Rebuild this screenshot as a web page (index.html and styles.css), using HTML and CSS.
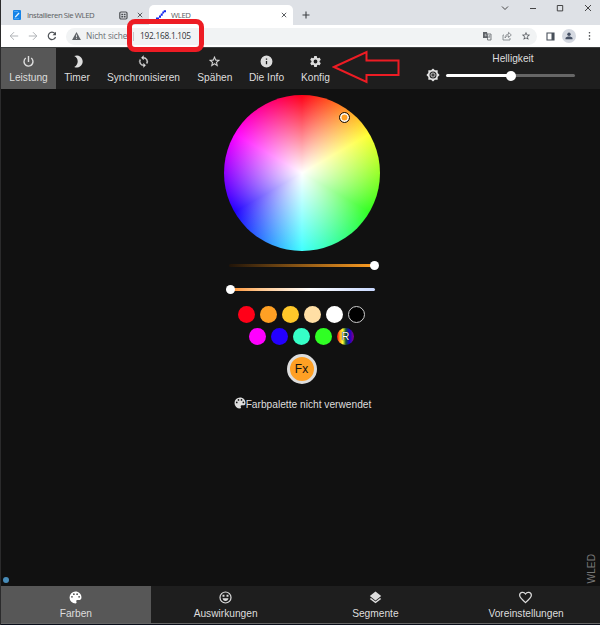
FILE: index.html
```html
<!DOCTYPE html>
<html lang="de">
<head>
<meta charset="utf-8">
<title>WLED</title>
<link rel="stylesheet" href="styles.css">
</head>
<body>
<div class="window">
  <div class="tabs">
    <div class="tab">
      <svg class="fav" viewBox="0 0 8 10"><rect width="8" height="10" rx="1" fill="#1583e8"/><path d="M2 6.5 5.5 2.5 6.5 3.5 3 7.2 1.8 7.5Z" fill="#e8f5ff"/><path d="M1 1.5h4M1 8.7h5" stroke="#65b5fa" stroke-width=".7"/></svg>
      <span class="tab-title">Installieren Sie WLED</span>
      <svg class="badge" viewBox="0 0 9 9"><rect x=".8" y="1" width="7.2" height="7" rx="1.2" fill="none" stroke="#4a4d51" stroke-width="1.2"/><path d="M2.300 2.800h1.800v1.400H2.300zM4.800 2.800h1.800v1.400H4.800zM2.300 4.900h1.800v1.500H2.300zM4.800 4.900h1.800v1.500H4.800z" fill="#4a4d51"/></svg>
      <svg class="close" viewBox="0 0 6 6"><path d="m.8.8 4.4 4.4M5.2.8.8 5.2"/></svg>
    </div>
    <div class="tab active">
      <svg class="fav wled" viewBox="0 0 10 10"><path d="M0 7.5h3v2H0zM3 5.5h2v2.3H3zM4.7 3.5h2v2.3h-2zM6.3 1.5h1.8v2H6.3zM7.7.3H10v2H7.7z" fill="#1226ee"/></svg>
      <span class="tab-title">WLED</span>
      <svg class="close" viewBox="0 0 6 6"><path d="m.8.8 4.4 4.4M5.2.8.8 5.2"/></svg>
    </div>
    <svg class="plus" viewBox="0 0 8 8"><path d="M4 .5v7M.5 4h7"/></svg>
    <div class="win-controls">
      <svg viewBox="0 0 8 8"><path d="m1 2.5 3 3 3-3"/></svg>
      <svg viewBox="0 0 8 8"><path d="M1 4.5h6"/></svg>
      <svg viewBox="0 0 8 8"><path d="M1.3 1.5h5.4v5.4H1.3z"/></svg>
      <svg viewBox="0 0 8 8"><path d="m1 1 6 6M7 1 1 7"/></svg>
    </div>
  </div>
  <div class="toolbar">
    <svg class="nav dim" viewBox="0 0 10 10"><path d="M9.2 5H1.2M5 1.2 1.2 5 5 8.8"/></svg>
    <svg class="nav dim" viewBox="0 0 10 10"><path d="M.8 5h8M5 1.2 8.8 5 5 8.8"/></svg>
    <svg class="nav" viewBox="0 0 10 10"><path d="M8.5 6A3.7 3.7 0 1 1 7.8 2.5"/><path d="M9 .7v3.5H5.5z" class="solid"/></svg>
    <div class="omnibox">
      <svg class="warn" viewBox="0 0 10 9"><path d="M5 0 10 9H0Z" fill="#5f6368"/><path d="M5 3v3M5 6.8v1" stroke="#f1f3f4" stroke-width=".9"/></svg>
      <span class="insecure">Nicht sicher</span>
      <span class="sep"></span>
      <span class="url">192.168.1.105</span>
      <div class="box-icons">
        <svg viewBox="0 0 10 10"><path d="M5 3h4v6H5.600z" fill="none" stroke="#5f6368" stroke-width=".8"/><path d="M1 1h4l1 6H1z" fill="#5f6368"/><path d="M4.3 3.2H3.2v1.7h1v-.7" fill="none" stroke="#ddd" stroke-width=".6"/><path d="M6.3 5h2.2M7.5 4.3v.8L6.4 7M6.8 5.5l1.5 1.7" fill="none" stroke="#5f6368" stroke-width=".5"/></svg>
        <svg viewBox="0 0 10 10"><path d="M2 4H1v5h7V7M3 7c.2-2.5 1.5-3.7 3.5-3.8V1.3L9.3 4 6.5 6.5V4.8C5 4.8 4 5.5 3 7Z" fill="none" stroke="#777b80" stroke-width=".8"/></svg>
        <svg viewBox="0 0 24 24"><path fill="#4f5358" d="M22 9.24l-7.19-.62L12 2 9.190 8.630 2 9.240l5.460 4.730L5.820 21 12 17.270 18.180 21l-1.630-7.030zM12 15.400l-3.760 2.270 1-4.280-3.320-2.880 4.380-.38L12 6.100l1.710 4.040 4.380.38-3.320 2.880 1 4.280z"/></svg>
      </div>
    </div>
    <svg class="side" viewBox="0 0 9 9"><path d="M1 1h7v7H1z" fill="none" stroke="#474f59" stroke-width="1.1"/><path d="M5.5 1H8v7H5.5z" fill="#474f59"/></svg>
    <span class="avatar"><svg viewBox="0 0 8 8"><circle cx="4" cy="2.3" r="1.7"/><path d="M.5 7.3V6C1.500 4 6.500 4 7.500 6v1.300z"/></svg></span>
    <svg class="more" viewBox="0 0 3 10"><circle cx="1.500" cy="1.700" r=".8"/><circle cx="1.500" cy="4.900" r=".8"/><circle cx="1.500" cy="8.100" r=".8"/></svg>
  </div>

  <header class="top">
    <div class="btn w55 on"><svg viewBox="0 0 24 24"><path d="M13.300 2h-2.600v11h2.600zm4.530 2.800-1.700 1.700A6.920 6.920 0 0 1 19 12a7 7 0 1 1-11.200-5.500L6.100 4.800A9.500 9.500 0 0 0 2.500 12a9.500 9.500 0 1 0 15.330-7.200z"/></svg><span>Leistung</span></div>
    <div class="btn w42"><svg viewBox="0 0 24 24"><path d="M6 2A11 11 0 1 1 6 22C14.500 18 14.500 6 6 2z"/></svg><span>Timer</span></div>
    <div class="btn w91"><svg viewBox="0 0 24 24"><path d="M12 4V1L8 5l4 4V6a6 6 0 0 1 5.250 8.800l1.460 1.460A8 8 0 0 0 12 4zm0 14a6 6 0 0 1-5.250-8.800L5.290 7.740A8 8 0 0 0 12 20v3l4-4-4-4z" stroke="#ddd" stroke-width=".6"/></svg><span>Synchronisieren</span></div>
    <div class="btn w52"><svg viewBox="0 0 24 24"><path d="M22 9.240l-7.190-.62L12 2 9.190 8.630 2 9.240l5.460 4.730L5.820 21 12 17.270 18.180 21l-1.630-7.030zM12 15.400l-3.760 2.270 1-4.280-3.320-2.880 4.380-.38L12 6.100l1.710 4.040 4.380.38-3.320 2.880 1 4.280z" stroke="#ddd" stroke-width=".4"/></svg><span>Spähen</span></div>
    <div class="btn w52"><svg viewBox="0 0 24 24"><path d="M12 1a11 11 0 1 0 0 22 11 11 0 0 0 0-22zm1.200 16h-2.400v-6h2.400zm0-8.200h-2.400V6.400h2.400z"/></svg><span>Die Info</span></div>
    <div class="btn w46"><svg viewBox="0 0 24 24"><path d="M19.430 12.980c.04-.32.07-.64.07-.98s-.03-.66-.07-.98l2.110-1.650c.19-.15.240-.42.120-.64l-2-3.460c-.12-.22-.39-.3-.61-.22l-2.490 1c-.52-.4-1.080-.73-1.690-.98l-.38-2.650A.488.488 0 0 0 14 2h-4c-.25 0-.46.180-.49.420l-.38 2.650c-.61.250-1.170.590-1.690.980l-2.490-1c-.23-.09-.49 0-.61.220l-2 3.460c-.13.220-.07.490.120.640l2.110 1.650c-.04.320-.07.650-.07.980s.030.660.070.980l-2.110 1.650c-.19.150-.24.420-.12.640l2 3.460c.12.220.39.300.61.220l2.490-1c.52.400 1.080.730 1.690.980l.38 2.650c.03.240.24.420.49.420h4c.25 0 .46-.18.490-.42l.38-2.650c.61-.25 1.170-.59 1.690-.98l2.490 1c.23.090.49 0 .61-.22l2-3.460c.12-.22.070-.49-.12-.64zM12 15.500a3.500 3.500 0 1 1 0-7 3.500 3.500 0 0 1 0 7z"/></svg><span>Konfig</span></div>
    <div class="brightness">
      <svg viewBox="0 0 24 24"><path d="M20 8.690V4h-4.690L12 .690 8.690 4H4v4.690L.690 12 4 15.310V20h4.690L12 23.310 15.310 20H20v-4.690L23.310 12z"/><circle cx="12" cy="12" r="6" fill="#222"/><circle cx="12" cy="12" r="3.600" fill="#444" stroke="#ddd" stroke-width="1.400"/></svg>
      <div class="bri"><span class="bri-label">Helligkeit</span><div class="track bri-track"><i class="thumb mid"></i></div></div>
    </div>
  </header>

  <main>
    <div class="wheel"><i class="picker"></i></div>
    <div class="track value"><i class="thumb end"></i></div>
    <div class="track kelvin"><i class="thumb start"></i></div>
    <div class="swatches first"><i class="red"></i><i class="orange"></i><i class="amber"></i><i class="warm"></i><i class="white"></i><i class="black"></i></div>
    <div class="swatches"><i class="magenta"></i><i class="blue"></i><i class="aqua"></i><i class="green"></i><i class="rainbow">R</i></div>
    <div class="fx">Fx</div>
    <div class="palette"><svg viewBox="0 0 24 24"><path d="M12 1a11 11 0 0 0 0 22c1.800 0 2.500-1.800 1.700-3-.9-1.500-.2-3.300 1.700-3.300H18A5 5 0 0 0 23 11.500C23 5.500 18 1 12 1zM5.500 12.500a1.700 1.700 0 1 1 0-3.400 1.700 1.700 0 0 1 0 3.400zm3.500-5a1.700 1.700 0 1 1 0-3.400 1.700 1.700 0 0 1 0 3.400zm6 0a1.700 1.700 0 1 1 0-3.400 1.700 1.700 0 0 1 0 3.400zm3.700 5a1.700 1.700 0 1 1 0-3.400 1.700 1.700 0 0 1 0 3.400z"/></svg><span>Farbpalette nicht verwendet</span></div>
    <div class="foot"><i class="dot"></i><span class="brand">WLED</span></div>
  </main>

  <nav class="bottom">
    <div class="btn on"><svg viewBox="0 0 24 24"><path fill="#fff" d="M12 1a11 11 0 0 0 0 22c1.800 0 2.500-1.800 1.700-3-.9-1.500-.2-3.300 1.700-3.300H18A5 5 0 0 0 23 11.500C23 5.500 18 1 12 1zM5.500 12.500a1.700 1.700 0 1 1 0-3.400 1.700 1.700 0 0 1 0 3.400zm3.500-5a1.700 1.700 0 1 1 0-3.400 1.700 1.700 0 0 1 0 3.400zm6 0a1.700 1.700 0 1 1 0-3.400 1.700 1.700 0 0 1 0 3.400zm3.700 5a1.700 1.700 0 1 1 0-3.400 1.700 1.700 0 0 1 0 3.400z"/></svg><span>Farben</span></div>
    <div class="btn"><svg viewBox="0 0 24 24"><circle cx="12" cy="12" r="10.200" fill="none" stroke="#ddd" stroke-width="2.200"/><path d="M6.500 7h3.600v3.600H6.500zM13.900 7h3.600v3.600h-3.600zM6.500 13.500h11c-.5 3-2.700 4.900-5.500 4.900s-5-1.900-5.500-4.900z"/></svg><span>Auswirkungen</span></div>
    <div class="btn"><svg viewBox="0 0 24 24"><path d="M12 19.500l-8.400-6.500L1.500 14.600 12 22.800l10.500-8.200L20.400 13zM12 17.500l10.500-8.200L12 1 1.500 9.300z"/></svg><span>Segmente</span></div>
    <div class="btn"><svg viewBox="0 0 24 24"><path d="M12 21.500C4 14.500 1.200 11.800 1.200 8c0-5.700 7.300-7.700 10.800-2.500C15.500.300 22.800 2.300 22.800 8c0 3.800-2.800 6.500-10.800 13.500z" fill="none" stroke="#ddd" stroke-width="2.300"/></svg><span class="presets">Voreinstellungen</span></div>
  </nav>
  <div class="edge"></div>

  <div class="mark"></div>
  <svg class="arrow" viewBox="0 0 68 34"><path d="M2 17 34.500 2v8.500h32V25h-32v7z"/></svg>
</div>
</body>
</html>
```
FILE: styles.css
```css
* { box-sizing: border-box; }
body { margin: 0; background: #111; overflow: hidden; }
svg { display: block; flex: none; }
i { font-style: normal; }
.window {
  position: relative;
  width: 600px; height: 625px;
  border-left: 1px solid #2b2b2c;
  display: flex; flex-direction: column;
  font: 10.2px/12px "Liberation Sans", Arial, sans-serif;
  color: #ddd;
}

/* browser tabs */
.tabs { height: 25px; background: #dee1e6; display: flex; flex: none; color: #5a5d61; font: 7.800px/10px "Open Sans", sans-serif; }
.tab { width: 148px; display: flex; align-items: center; padding: 5px 6px 0 12px; }
.tab.active { width: 144px; margin-top: 5px; padding: 0 6px 0 7px; background: #fff; border-radius: 5px 5px 0 0; }
.fav { width: 8px; height: 10px; margin-right: 6px; }
.fav.wled { width: 10px; margin-right: 5px; }
.tab-title { flex: 1; white-space: nowrap; letter-spacing: -.43px; }
.badge { width: 9px; height: 9px; margin-right: 9px; }
.close { width: 6px; height: 6px; fill: none; stroke: #4a4d51; stroke-width: .9; }
.plus { width: 8px; height: 8px; margin: 11px 0 0 9px; stroke: #3c4043; stroke-width: 1.1; }
.win-controls { margin-left: auto; display: flex; gap: 19.700px; padding: 4px 8px 0 0; }
.win-controls svg { width: 8px; height: 8px; fill: none; stroke: #333; stroke-width: .9; }

/* address bar */
.toolbar { height: 22px; flex: none; background: #fff; display: flex; align-items: center; padding-left: 8px; }
.nav { width: 10px; height: 10px; margin-right: 9px; fill: none; stroke: #4d5156; stroke-width: 1.2; }
.nav .solid { fill: #4d5156; stroke: none; }
.nav.dim { stroke: #b0b3b7; stroke-width: 1; }
.omnibox { width: 471px; height: 17px; border-radius: 9px; background: #f1f3f4; display: flex; align-items: center; padding: 0 6px 0 6px; font: 8.300px/12px "Open Sans", sans-serif; color: #696d72; }
.warn { width: 9px; height: 8px; margin-right: 5px; }
.insecure { width: 47px; overflow: hidden; white-space: nowrap; letter-spacing: -.1px; }
.sep { width: 1px; height: 9px; background: #c3c6c9; margin-right: 6px; }
.url { color: #303235; letter-spacing: -.24px; }
.box-icons { margin-left: auto; display: flex; gap: 9.500px; }
.box-icons svg { width: 10px; height: 10px; }
.side { width: 9px; height: 9px; margin-left: 9px; }
.avatar { width: 14px; height: 14px; margin-left: 7px; border-radius: 50%; background: #d5d9e1; display: flex; align-items: center; justify-content: center; }
.avatar svg { width: 8px; height: 8px; fill: #465064; }
.more { width: 3px; height: 10px; margin-left: 12px; fill: #44474b; }

/* top menu */
.top { height: 42px; flex: none; background: #1e1e1e; border-top: 1px solid #3d4040; display: flex; }
.btn { display: flex; flex-direction: column; align-items: center; padding-top: 7px; gap: 4px; white-space: nowrap; }
.btn svg { width: 13px; height: 13px; fill: #ddd; }
.btn.on { background: #575757; }
.w55 { width: 55px; }
.w42 { width: 42px; }
.w91 { width: 91px; }
.w52 { width: 51.700px; }
.w46 { width: 46px; }
.brightness { margin-left: auto; width: 174px; display: flex; align-items: flex-start; }
.brightness svg { width: 14px; height: 14px; margin: 20px 6px 0 0; fill: #e5e5e5; }
.bri { width: 129px; padding-top: 5px; text-align: center; }
.bri-label { padding-left: 5px; }
.track { position: relative; height: 3px; border-radius: 2px; }
.bri-track { margin-top: 9px; background: linear-gradient(90deg, #fff 50%, #666 50%); }
.thumb { position: absolute; width: 9px; height: 9px; top: -3px; border-radius: 50%; background: #fff; }
.thumb.mid { left: 60px; width: 10px; height: 10px; top: -3.500px; }
.thumb.end { right: -4px; }
.thumb.start { left: -3px; }

/* color page */
main { height: 497px; flex: none; background: #111; display: flex; flex-direction: column; align-items: center; padding: 6px 0 0 2px; }
.wheel {
  position: relative; width: 156px; height: 156px; border-radius: 50%;
  background:
    radial-gradient(closest-side, #fff, rgba(255,255,255,0)),
    conic-gradient(#ff0018, #ffff30 60deg, #30ff20 120deg, #40ffff 180deg, #2000ff 240deg, #ff00ff 300deg, #ff0018);
}
.picker { position: absolute; left: 115px; top: 17px; width: 11px; height: 11px; border-radius: 50%; border: 1.500px solid #111; background: #ffa024; box-shadow: inset 0 0 0 1.500px #fff; }
.value { width: 146px; margin-top: 13px; background: linear-gradient(90deg, #201409, #ff9e22); }
.kelvin { width: 146px; margin-top: 21px; background: linear-gradient(90deg, #ff9030, #ffc890 22%, #fff 55%, #c8d8ff); }
.swatches { display: flex; gap: 5px; margin-top: 5px; }
.swatches.first { margin-top: 15px; }
.swatches i { width: 17px; height: 17px; border-radius: 50%; }
.red { background: #ff0018; }
.orange { background: #ffa024; }
.amber { background: #ffc82a; }
.warm { background: #ffdfa5; }
.white { background: #fff; }
.black { background: #000; border: 1px solid #ccc; }
.magenta { background: #f0f; }
.blue { background: #2400ff; }
.aqua { background: #36ffc8; }
.green { background: #30ff24; }
.rainbow { background: linear-gradient(90deg, #f01, #f92 16%, #ff3 34%, #153 52%, #10c 72%, #808); color: #fff; font-size: 10.500px; line-height: 17px; text-align: center; text-shadow: 0 0 1px #000, 0 0 1px #000; }
.fx { width: 30px; height: 30px; margin-top: 9px; border-radius: 50%; border: 3px solid #ddd; background: #ffa024; color: #111; font-size: 12px; line-height: 25px; text-align: center; }
.palette { display: flex; margin-top: 14px; padding-left: 2px; white-space: nowrap; }
.palette svg { width: 12px; height: 12px; margin-top: -1px; fill: #ddd; }
.palette span { margin-top: 1px; }
.foot { align-self: stretch; margin-top: auto; margin-left: -2px; display: flex; justify-content: space-between; align-items: flex-end; padding: 0 2px 3px; }
.dot { width: 6px; height: 6px; border-radius: 50%; background: #488cb8; }
.brand { writing-mode: vertical-rl; transform: rotate(180deg); color: #777; line-height: 12px; }

/* bottom navigation */
.bottom { height: 37px; flex: none; background: #1e1e1e; display: flex; }
.bottom .btn { width: 150px; padding-top: 5px; }
.presets { padding-left: 2px; }
.edge { height: 2px; background: #080c18; border-top: 1px solid #666; }

/* annotations */
.mark { position: absolute; left: 126px; top: 19px; width: 77px; height: 33px; border: 5px solid #ed1c24; border-radius: 8px; }
.arrow { position: absolute; left: 331px; top: 50px; width: 68px; height: 34px; fill: none; stroke: #ed1c24; stroke-width: 2; }
```
